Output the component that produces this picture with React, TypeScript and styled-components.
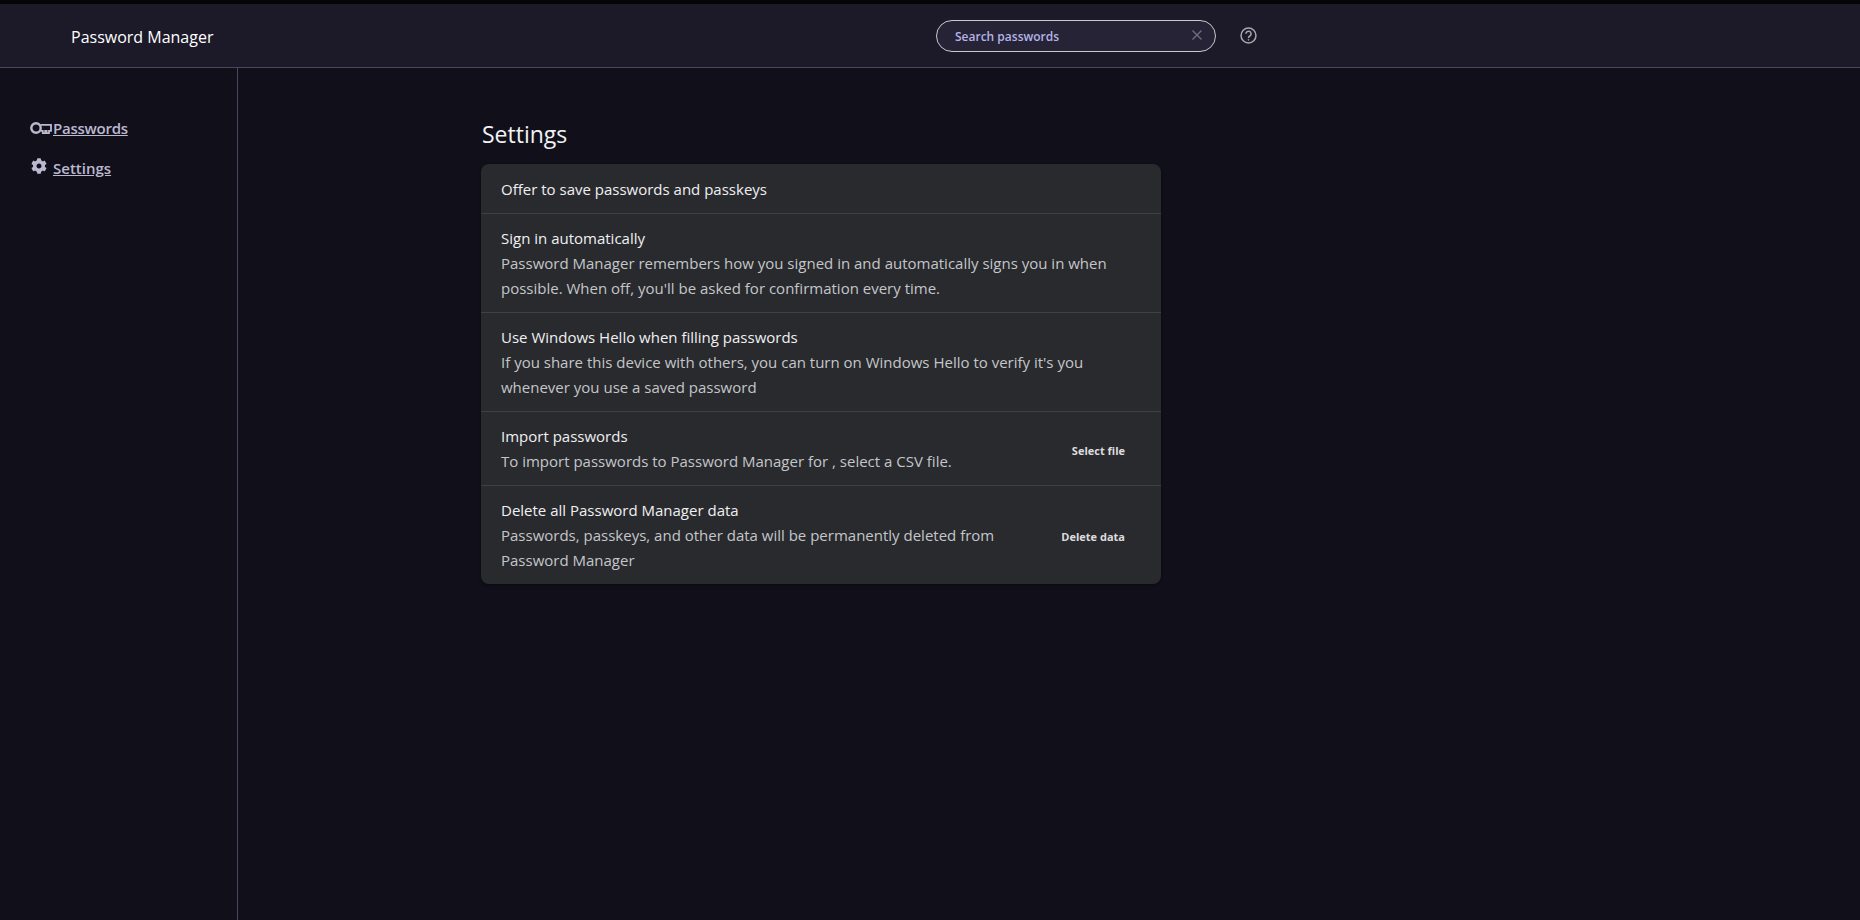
import React from "react";
import styled, { createGlobalStyle } from "styled-components";
import { FaCog } from "react-icons/fa";

const GlobalStyle = createGlobalStyle`
  html, body {
    margin: 0;
    height: 100%;
    background: #11101a;
  }
  #root {
    height: 100%;
  }
`;

const Page = styled.div`
  width: 1860px;
  height: 920px;
  overflow: hidden;
  display: flex;
  flex-direction: column;
  background: #11101a;
  border-top: 4px solid #050508;
  box-sizing: border-box;
  font-family: "Open Sans", "Noto Sans", sans-serif;
  color: #e8e8ec;
`;

const Header = styled.header`
  height: 64px;
  flex-shrink: 0;
  box-sizing: border-box;
  display: flex;
  align-items: center;
  background: #1c1a29;
  border-bottom: 1px solid #4a4460;
`;

const AppTitle = styled.div`
  width: 936px;
  padding: 2px 0 0 71px;
  box-sizing: border-box;
  font-size: 16px;
  color: #ffffff;
`;

const SearchBox = styled.div`
  width: 280px;
  height: 32px;
  box-sizing: border-box;
  display: flex;
  align-items: center;
  justify-content: space-between;
  padding: 1px 12px 0 18px;
  background: #272336;
  border: 1px solid #c9c9cc;
  border-radius: 16px;
  font-size: 12px;
  font-weight: 600;
  color: #b3b4e6;
`;

const ClearIcon = styled.svg`
  width: 12px;
  height: 12px;
  margin-top: -2px;
  stroke: #6f6c80;
  stroke-width: 1.4;
  fill: none;
`;

const HelpIcon = styled.svg`
  width: 17px;
  height: 17px;
  margin-left: 24px;
  fill: none;
  stroke: #a8a8ac;
`;

const Body = styled.div`
  flex: 1;
  display: flex;
  min-height: 0;
`;

const Sidebar = styled.nav`
  width: 238px;
  box-sizing: border-box;
  border-right: 1px solid #4a4460;
  padding-top: 40px;
  display: flex;
  flex-direction: column;
`;

const NavItem = styled.a<{ $gap: number; $spacing?: number }>`
  height: 40px;
  display: flex;
  align-items: center;
  gap: ${(p) => p.$gap}px;
  padding-left: 30px;
  font-size: 15px;
  font-weight: 600;
  letter-spacing: ${(p) => p.$spacing ?? 0}px;
  color: #bcb8d0;
  span {
    text-decoration: underline;
  }
`;

const KeyIcon = styled.svg`
  width: 22px;
  height: 12px;
  flex-shrink: 0;
  fill: none;
  stroke: #bcb8d0;
`;

const GearIcon = styled(FaCog)`
  width: 16px;
  height: 16px;
  flex-shrink: 0;
  margin: 0 0 4px 1px;
  color: #bcb8d0;
`;

const Main = styled.main`
  flex: 1;
  padding: 50px 0 0 243px;
`;

const PageTitle = styled.h1`
  margin: 0 0 14px;
  padding-left: 1px;
  height: 32px;
  line-height: 32px;
  font-size: 23px;
  font-weight: 400;
  color: #f2f2f5;
`;

const Card = styled.section`
  width: 680px;
  background: #292a2e;
  border-radius: 8px;
  box-shadow: 0 1px 3px rgba(0, 0, 0, 0.5);
`;

const Row = styled.div`
  display: flex;
  align-items: center;
  padding: 12px 36px 11px 20px;
  border-bottom: 1px solid #3f4044;
  &:first-child {
    padding: 13px 36px 11px 20px;
  }
  &:last-child {
    border-bottom: none;
  }
`;

const RowText = styled.div<{ $narrow: boolean }>`
  flex: 1;
  max-width: ${(p) => (p.$narrow ? "530px" : "none")};
`;

const RowTitle = styled.div`
  font-size: 15px;
  line-height: 25px;
  color: #f0f0f2;
`;

const RowDesc = styled.div`
  font-size: 15px;
  line-height: 25px;
  color: #c4c6c9;
`;

const RowAction = styled.button`
  margin-left: auto;
  padding: 2px 0 0;
  border: none;
  background: none;
  font-family: inherit;
  font-size: 11px;
  font-weight: 700;
  color: #dcdcde;
`;

const rows = [
  { title: "Offer to save passwords and passkeys" },
  {
    title: "Sign in automatically",
    desc: "Password Manager remembers how you signed in and automatically signs you in when possible. When off, you'll be asked for confirmation every time.",
  },
  {
    title: "Use Windows Hello when filling passwords",
    desc: "If you share this device with others, you can turn on Windows Hello to verify it's you whenever you use a saved password",
  },
  {
    title: "Import passwords",
    desc: "To import passwords to Password Manager for , select a CSV file.",
    action: "Select file",
  },
  {
    title: "Delete all Password Manager data",
    desc: "Passwords, passkeys, and other data will be permanently deleted from Password Manager",
    action: "Delete data",
  },
];

const App: React.FC = () => {
  return (
    <Page>
      <GlobalStyle />
      <Header>
        <AppTitle>Password Manager</AppTitle>
        <SearchBox>
          Search passwords
          <ClearIcon viewBox="0 0 12 12">
            <path d="M1.5 1.5l9 9M10.5 1.5l-9 9" />
          </ClearIcon>
        </SearchBox>
        <HelpIcon viewBox="0 0 18 18">
          <circle cx="9" cy="9" r="7.9" strokeWidth="1.6" />
          <path d="M6.3 7.2a2.7 2.7 0 1 1 4.3 2.1c-1 .7-1.6 1.1-1.6 2.3" strokeWidth="1.6" />
          <circle cx="9" cy="13.6" r="0.5" strokeWidth="1" />
        </HelpIcon>
      </Header>
      <Body>
        <Sidebar>
          <NavItem $gap={1} $spacing={-0.25}>
            <KeyIcon viewBox="0 0 22 12">
              <circle cx="6" cy="6" r="4.7" strokeWidth="2.4" />
              <path d="M10.5 2.9H21v6h-2v2.2h-2.4V8.9h-1.4v2.2h-2.4V8.9h-2.3" strokeWidth="1.8" />
            </KeyIcon>
            <span>Passwords</span>
          </NavItem>
          <NavItem $gap={6}>
            <GearIcon />
            <span>Settings</span>
          </NavItem>
        </Sidebar>
        <Main>
          <PageTitle>Settings</PageTitle>
          <Card>
            {rows.map((row) => (
              <Row key={row.title}>
                <RowText $narrow={!!row.action}>
                  <RowTitle>{row.title}</RowTitle>
                  {row.desc && <RowDesc>{row.desc}</RowDesc>}
                </RowText>
                {row.action && <RowAction>{row.action}</RowAction>}
              </Row>
            ))}
          </Card>
        </Main>
      </Body>
    </Page>
  );
};

export default App;
